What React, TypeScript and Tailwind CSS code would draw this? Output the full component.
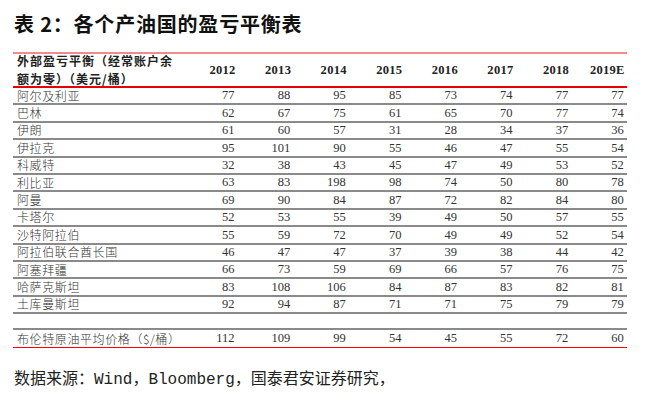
import * as React from 'react';

const years = ['2012', '2013', '2014', '2015', '2016', '2017', '2018', '2019E'];

const rows: [string, number[]][] = [
  ['阿尔及利亚', [77, 88, 95, 85, 73, 74, 77, 77]],
  ['巴林', [62, 67, 75, 61, 65, 70, 77, 74]],
  ['伊朗', [61, 60, 57, 31, 28, 34, 37, 36]],
  ['伊拉克', [95, 101, 90, 55, 46, 47, 55, 54]],
  ['科威特', [32, 38, 43, 45, 47, 49, 53, 52]],
  ['利比亚', [63, 83, 198, 98, 74, 50, 80, 78]],
  ['阿曼', [69, 90, 84, 87, 72, 82, 84, 80]],
  ['卡塔尔', [52, 53, 55, 39, 49, 50, 57, 55]],
  ['沙特阿拉伯', [55, 59, 72, 70, 49, 49, 52, 54]],
  ['阿拉伯联合酋长国', [46, 47, 47, 37, 39, 38, 44, 42]],
  ['阿塞拜疆', [66, 73, 59, 69, 66, 57, 76, 75]],
  ['哈萨克斯坦', [83, 108, 106, 84, 87, 83, 82, 81]],
  ['土库曼斯坦', [92, 94, 87, 71, 71, 75, 79, 79]],
];

const brent = [112, 109, 99, 54, 45, 55, 72, 60];

function Cells({ label, values }: { label: string; values: number[] }) {
  return (
    <>
      <div className="w-[169px] pl-[4px] font-['Noto_Sans_CJK_SC',sans-serif] text-[12px] font-light leading-none tracking-[0.6px] text-[#333]">
        {label}
      </div>
      {values.map((v, i) => (
        <div
          key={i}
          className="w-[55.6px] pr-[3px] text-right font-['Liberation_Serif',serif] text-[12.5px] leading-none text-[#333]"
        >
          {v}
        </div>
      ))}
    </>
  );
}

export default function App() {
  return (
    <div className="h-[412px] w-[647px] bg-white text-black">
      <h1 className="pl-[14px] pt-[11px] font-['Noto_Sans_CJK_SC',sans-serif] text-[20px] font-bold leading-[26px] tracking-[0.8px] text-[#111]">
        表 2：各个产油国的盈亏平衡表
      </h1>

      <div className="ml-[13px] mt-[15px] w-[614px] border-t-2 border-[#f28b8b]">
        {/* header */}
        <div className="flex h-[34px] items-center border-b-2 border-[#e60000]">
          <div className="w-[169px] pl-[4px] font-['Noto_Sans_CJK_SC',sans-serif] text-[12px] font-bold leading-[18px] tracking-[1px] text-[#222]">
            外部盈亏平衡（经常账户余
            <br />
            额为零）（美元/桶）
          </div>
          {years.map((y) => (
            <div
              key={y}
              className="w-[55.6px] pr-[2px] text-right font-['Liberation_Serif',serif] text-[12.5px] font-bold leading-none tracking-[0.3px] text-[#222]"
            >
              {y}
            </div>
          ))}
        </div>

        {rows.map(([label, values]) => (
          <div key={label} className="flex h-[17.4px] items-center border-b-2 border-[#8a8a8a]">
            <Cells label={label} values={values} />
          </div>
        ))}

        <div className="h-[16px] border-b-2 border-[#8a8a8a]" />

        <div className="flex h-[18px] items-center border-b border-[#ff0000]">
          <Cells label="布伦特原油平均价格（$/桶）" values={brent} />
        </div>
      </div>

      <p className="pl-[14px] pt-[22px] font-['Liberation_Mono','Noto_Sans_CJK_SC',monospace] text-[16px] leading-[20px] text-[#222]">
        数据来源：Wind，Bloomberg，国泰君安证券研究，
      </p>
    </div>
  );
}
